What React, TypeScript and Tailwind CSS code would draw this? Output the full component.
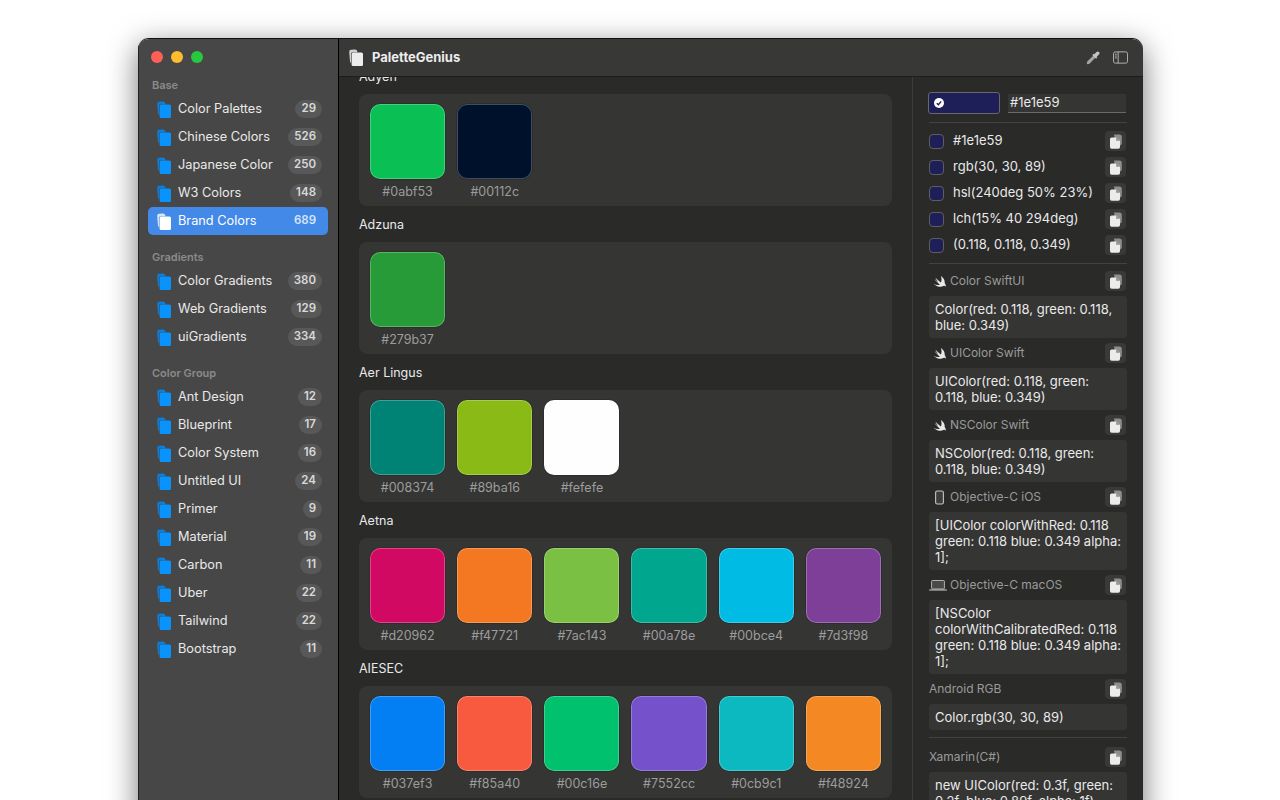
const sidebar = [
  { title: "Base", items: [["Color Palettes", 29], ["Chinese Colors", 526], ["Japanese Color", 250], ["W3 Colors", 148], ["Brand Colors", 689]] },
  { title: "Gradients", items: [["Color Gradients", 380], ["Web Gradients", 129], ["uiGradients", 334]] },
  { title: "Color Group", items: [["Ant Design", 12], ["Blueprint", 17], ["Color System", 16], ["Untitled UI", 24], ["Primer", 9], ["Material", 19], ["Carbon", 11], ["Uber", 22], ["Tailwind", 22], ["Bootstrap", 11]] },
] as { title: string; items: [string, number][] }[];

const brands = [
  { name: "Adyen", colors: ["#0abf53", "#00112c"] },
  { name: "Adzuna", colors: ["#279b37"] },
  { name: "Aer Lingus", colors: ["#008374", "#89ba16", "#fefefe"] },
  { name: "Aetna", colors: ["#d20962", "#f47721", "#7ac143", "#00a78e", "#00bce4", "#7d3f98"] },
  { name: "AIESEC", colors: ["#037ef3", "#f85a40", "#00c16e", "#7552cc", "#0cb9c1", "#f48924"] },
];

const formats = ["#1e1e59", "rgb(30, 30, 89)", "hsl(240deg 50% 23%)", "lch(15% 40 294deg)", "(0.118, 0.118, 0.349)"];

const snippets = [
  { label: "Color SwiftUI", icon: "swift", code: "Color(red: 0.118, green: 0.118, blue: 0.349)" },
  { label: "UIColor Swift", icon: "swift", code: "UIColor(red: 0.118, green: 0.118, blue: 0.349)" },
  { label: "NSColor Swift", icon: "swift", code: "NSColor(red: 0.118, green: 0.118, blue: 0.349)" },
  { label: "Objective-C iOS", icon: "phone", code: "[UIColor colorWithRed: 0.118 green: 0.118 blue: 0.349 alpha: 1];" },
  { label: "Objective-C macOS", icon: "laptop", code: "[NSColor colorWithCalibratedRed: 0.118 green: 0.118 blue: 0.349 alpha: 1];" },
  { label: "Android RGB", icon: "", code: "Color.rgb(30, 30, 89)" },
];

function SheetsIcon({ back, front }: { back: string; front: string }) {
  return (
    <svg viewBox="0 0 14 17" className="w-[14px] h-[17px] shrink-0">
      <path d="M0.2 3 Q0 1.2 1.8 0.8 L6 0.4 Q7.8 0.3 8.2 2 L8.4 3.2 H3.6 Q2 3.2 2 4.8 V14 Q1.2 13.8 1 12.5 Z" fill={back} />
      <rect x="2.6" y="3.6" width="11.4" height="13.4" rx="1.5" fill={front} />
    </svg>
  );
}

function CopyIcon() {
  return (
    <svg viewBox="0 0 12 15" className="w-[12px] h-[15px]">
      <path d="M4 0.4 H9.4 Q11.8 0.4 11.8 2.8 V9.6 Q11.8 11.4 10.2 11.4 H6 Z" fill="#8e8e8e" />
      <path d="M1.6 3.4 H6 L10 7 V13 Q10 14.8 8.4 14.8 H1.6 Q0 14.8 0 13 V5 Q0 3.4 1.6 3.4 Z" fill="#ececec" />
      <path d="M6.2 3.8 V6.8 H9.6 Z" fill="#8e8e8e" />
    </svg>
  );
}

function CopyButton() {
  return (
    <button className="w-[21px] h-[20px] mr-[1px] rounded-[4px] bg-[#393938] flex items-center justify-center shrink-0">
      <CopyIcon />
    </button>
  );
}

function SnippetIcon({ kind }: { kind: string }) {
  if (kind === "swift")
    return (
      <svg viewBox="0 0 16 14" className="w-[15px] h-[13px] ml-[3px] mr-[3px] shrink-0">
        <path d="M9.5 1 C12.5 3 14 6 13.6 8.6 C14.6 10 15 11.4 14.8 12.6 C14 11.6 13 11.4 12.2 11.9 C10.2 13.2 6 13.4 1.6 9.3 C4 10.8 6.6 11 8.4 10.1 C6 8.4 4 6.2 2.6 4.2 C4.2 5.8 6 7.2 7.2 8 C5.6 6.2 4.2 4.2 3.6 2.6 C5.6 4.8 7.8 6.8 9.6 8 C10.4 6 10.4 3.4 9.5 1 Z" fill="#e8e8e8" />
      </svg>
    );
  if (kind === "phone")
    return (
      <svg viewBox="0 0 10 16" className="w-[9px] h-[15px] ml-[6px] mr-[6px] shrink-0">
        <rect x="0.7" y="0.7" width="8.6" height="14.6" rx="1.8" fill="#3d3d3c" stroke="#c8c8c8" strokeWidth="1.2" />
      </svg>
    );
  if (kind === "laptop")
    return (
      <svg viewBox="0 0 18 11" className="w-[18px] h-[11px] mr-[3px] shrink-0">
        <rect x="2.6" y="0.5" width="12.8" height="8.5" rx="0.8" fill="#4a4a49" stroke="#bdbdbd" strokeWidth="0.9" />
        <rect x="0" y="9.4" width="18" height="1.2" rx="0.5" fill="#cfcfcf" />
      </svg>
    );
  return null;
}

export default function App() {
  return (
    <div className="h-[800px] overflow-hidden bg-white pt-[38px] pl-[138px] font-['Inter',sans-serif] text-[13px]">
      <div className="w-[1005px] h-[800px] flex rounded-t-[11px] overflow-hidden border-t border-t-[#111] shadow-[0_8px_30px_rgba(0,0,0,0.55)] text-[#e9e9e9]">
        {/* Sidebar */}
        <aside className="w-[200px] shrink-0 bg-[#474747] border-l border-l-[#222] pl-[9px] pr-[10px]">
          <div className="flex gap-[8px] pl-[3px] pt-[12px] pb-[14px]">
            <span className="w-[12px] h-[12px] rounded-full bg-[#ff5f57]" />
            <span className="w-[12px] h-[12px] rounded-full bg-[#febc2e]" />
            <span className="w-[12px] h-[12px] rounded-full bg-[#28c840]" />
          </div>
          {sidebar.map((group) => (
            <div key={group.title} className="mb-[14px]">
              <div className="h-[16px] pl-[4px] flex items-center text-[11px] font-semibold text-[#8b8b8b]">{group.title}</div>
              <div className="mt-[2px]">
                {group.items.map(([name, count]) => {
                  const active = name === "Brand Colors";
                  return (
                    <div key={name} className={`h-[28px] flex items-center pl-[9px] pr-[6px] rounded-[5px] text-[12.75px] ${active ? "bg-[#4289e8] text-white" : ""}`}>
                      <SheetsIcon back={active ? "#d5e5fa" : "#0a7ee0"} front={active ? "#ffffff" : "#0a93fb"} />
                      <span className="ml-[7px] flex-1 truncate">{name}</span>
                      <span className={`h-[18px] px-[6px] rounded-full flex items-center text-[11.5px] font-semibold ${active ? "text-[#d5e5fa]" : "bg-[#585858] text-[#d8d8d8]"}`}>{count}</span>
                    </div>
                  );
                })}
              </div>
            </div>
          ))}
        </aside>

        <div className="flex-1 flex flex-col border-l border-l-black min-w-0">
          {/* Toolbar */}
          <header className="h-[38px] shrink-0 bg-[#383837] border-b border-b-[#1d1d1d] flex items-center pl-[10px] pr-[15px]">
            <SheetsIcon back="#d0d0d0" front="#ededed" />
            <span className="ml-[9px] font-bold text-[13px] text-[#ececec]">PaletteGenius</span>
            <div className="ml-auto flex items-center gap-[13px]">
              <svg viewBox="0 0 16 16" className="w-[14px] h-[14px]">
                <path d="M0.8 15.2 L1.4 12 L8.2 5.4 L10.6 7.8 L4 14.6 Z" fill="#a4a4a4" />
                <path d="M7.8 3.8 L12.2 8.2" stroke="#c4c4c4" strokeWidth="1.8" />
                <path d="M10.6 5.4 L13.4 2.6" stroke="#c4c4c4" strokeWidth="4" strokeLinecap="round" />
              </svg>
              <svg viewBox="0 0 16 13" className="w-[15px] h-[13px]">
                <rect x="0.5" y="0.5" width="15" height="12" rx="2" fill="none" stroke="#b8b8b8" />
                <path d="M5.5 0.5 V12.5" stroke="#b8b8b8" />
                <path d="M2 3 H4 M2 5 H4 M2 7 H4" stroke="#b8b8b8" />
              </svg>
            </div>
          </header>

          <div className="flex-1 flex min-h-0">
            {/* Brand list */}
            <main className="flex-1 min-w-0 bg-[#2a2a29] px-[20px] overflow-hidden text-[12.5px]">
              <div className="-mt-[19px]">
                {brands.map((brand) => (
                  <section key={brand.name}>
                    <h3 className="h-[36px] pt-[2px] flex items-center text-[#e9e9e9]">{brand.name}</h3>
                    <div className="h-[112px] bg-[#353534] rounded-[8px] px-[11px] pt-[10px] grid grid-cols-6 gap-x-[12px] content-start">
                      {brand.colors.map((color) => (
                        <div key={color} className="flex flex-col items-center">
                          <div className="w-full h-[75px] rounded-[10px] border border-white/25 shadow-[0_0_0_0.5px_rgba(0,0,0,0.3)]" style={{ backgroundColor: color }} />
                          <span className="mt-[4px] text-[#9c9c9c]">{color}</span>
                        </div>
                      ))}
                    </div>
                  </section>
                ))}
              </div>
            </main>

            {/* Detail panel */}
            <aside className="w-[231px] shrink-0 bg-[#2a2a29] border-l border-l-[#3c3c3b] px-[16px] overflow-hidden">
              <div className="flex items-center gap-[8px] pt-[15px] -ml-[1px]">
                <div className="w-[72px] h-[22px] rounded-[3px] bg-[#1e1e59] border border-[#686868] flex items-center pl-[5px]">
                  <span className="w-[10px] h-[10px] rounded-full bg-white flex items-center justify-center">
                    <svg viewBox="0 0 10 10" className="w-[10px] h-[10px]"><path d="M2.8 5.2 L4.4 6.8 L7.2 3.4" fill="none" stroke="#1e1e59" strokeWidth="1.4" /></svg>
                  </span>
                </div>
                <div className="w-[118px] h-[19px] bg-[#353534] border-b border-b-[#6a6a6a] pl-[2px] pt-[1px] flex items-center text-[#e9e9e9]">#1e1e59</div>
              </div>
              <div className="mt-[8px] border-t border-t-[#424241] pt-[5px] pb-[5px]">
                {formats.map((f) => (
                  <div key={f} className="h-[26px] flex items-center">
                    <span className="w-[15px] h-[15px] rounded-[4px] bg-[#1e1e59] border border-[#5e5e5e] shrink-0" />
                    <span className="ml-[9px] flex-1 whitespace-nowrap">{f}</span>
                    <CopyButton />
                  </div>
                ))}
              </div>
              <div className="border-t border-t-[#424241] pt-[7px]">
                {snippets.map((s) => (
                  <div key={s.label}>
                    <div className="h-[20px] flex items-center text-[12px] text-[#9a9a9a] mb-[5px]">
                      <SnippetIcon kind={s.icon} />
                      <span className="flex-1">{s.label}</span>
                      <CopyButton />
                    </div>
                    <div className="bg-[#353534] rounded-[3px] pl-[6px] pr-[4px] py-[5px] leading-[16px] text-[#e9e9e9] mb-[5px]">{s.code}</div>
                  </div>
                ))}
              </div>
              <div className="mt-[7px] border-t border-t-[#424241] pt-[9px]">
                <div className="h-[20px] flex items-center text-[12px] text-[#9a9a9a] mb-[5px]">
                  <span className="flex-1">Xamarin(C#)</span>
                  <CopyButton />
                </div>
                <div className="bg-[#353534] rounded-[3px] pl-[6px] pr-[4px] py-[5px] leading-[16px] text-[#e9e9e9]">new UIColor(red: 0.3f, green: 0.2f, blue: 0.89f, alpha: 1f)</div>
              </div>
            </aside>
          </div>
        </div>
      </div>
    </div>
  );
}
